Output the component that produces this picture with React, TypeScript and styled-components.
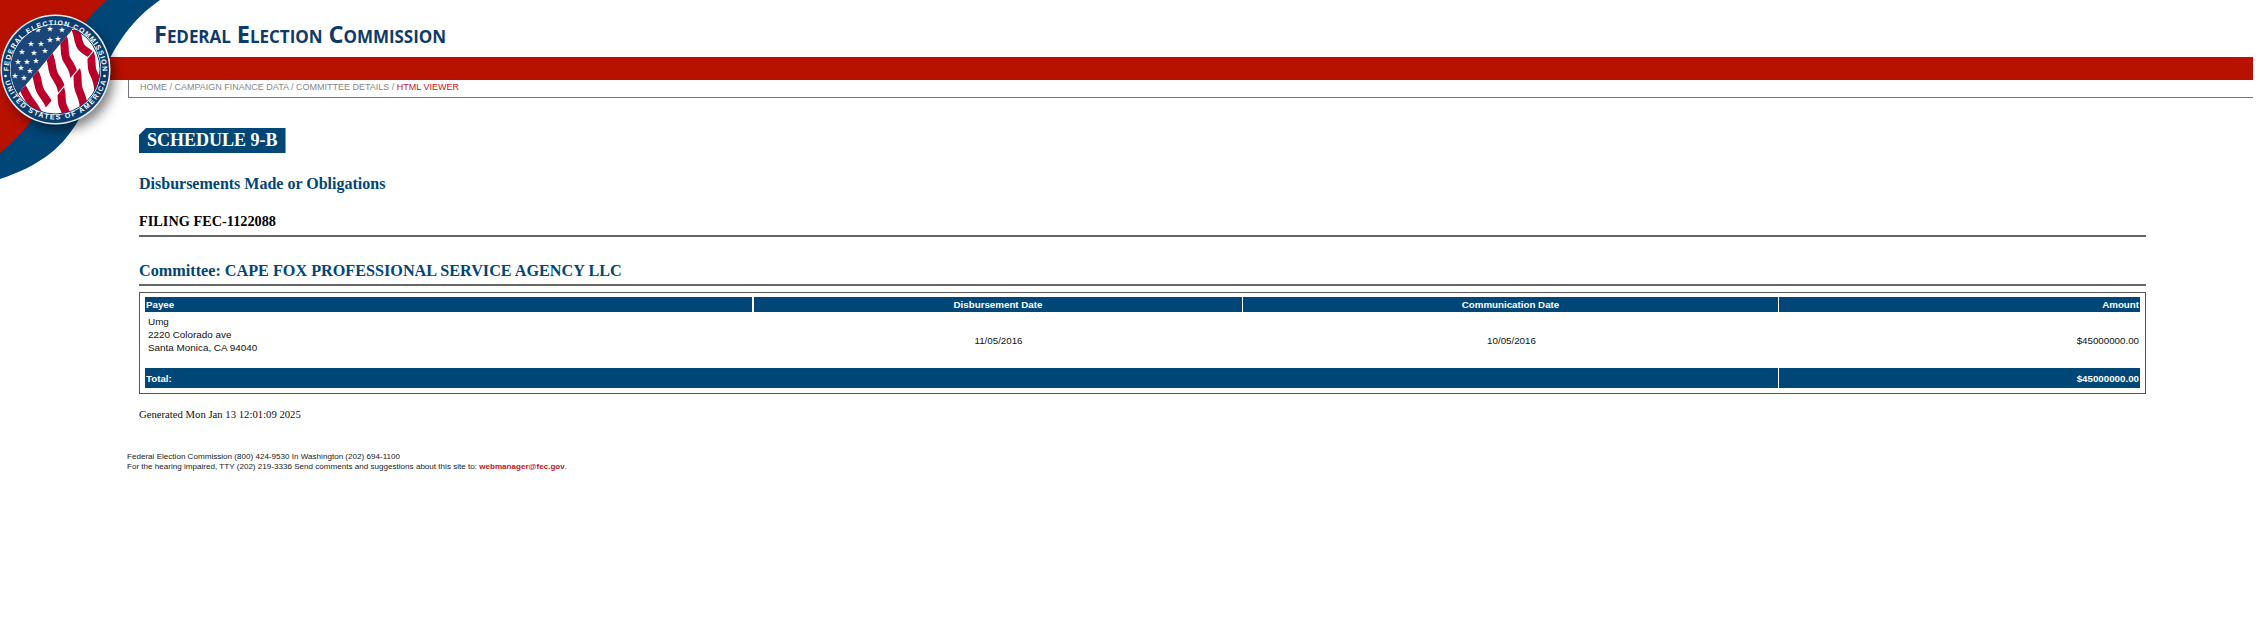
import React from 'react';
import styled, {createGlobalStyle} from 'styled-components';

const navy = '#004677';
const serif = '"Liberation Serif", "Times New Roman", serif';
const sans = '"Liberation Sans", Arial, sans-serif';

const GlobalStyle = createGlobalStyle`
  html, body {
    margin: 0;
    padding: 0;
    background: #fff;
    font-family: ${serif};
  }
`;

const Page = styled.div`
  position: relative;
  width: 2265px;
  height: 643px;
  overflow: hidden;
`;

const SealWrap = styled.div`
  position: absolute;
  left: 0;
  top: 0;
  width: 170px;
  height: 190px;
`;

const Masthead = styled.div`
  height: 57px;
  box-sizing: border-box;
  padding: 20px 0 0 154px;
`;

const SiteTitle = styled.div`
  font-family: "Open Sans", ${sans};
  font-weight: 700;
  font-size: 23.6px;
  font-variant: small-caps;
  line-height: 28px;
  letter-spacing: -0.05px;
  color: #0f3b68;
`;

const RedBar = styled.div`
  height: 23px;
  margin: 0 12px 0 110px;
  background: #b91100;
`;

const Breadcrumb = styled.div`
  height: 18px;
  box-sizing: border-box;
  margin: 0 12px 0 128px;
  padding: 1px 0 0 11px;
  border-left: 1px solid #777;
  border-bottom: 1px solid #777;
  font-family: ${sans};
  font-size: 9px;
  line-height: 12px;
  color: #888;
`;

const Current = styled.span`
  color: #c8141c;
`;

const Content = styled.div`
  width: 2007px;
  margin: 30px 0 0 139px;
`;

const Badge = styled.h1`
  display: inline-block;
  margin: 0;
  height: 25px;
  padding: 0 8px;
  background: ${navy};
  clip-path: polygon(7px 0, 100% 0, 100% 100%, 0 100%, 0 7px);
  font-family: ${serif};
  font-size: 18px;
  font-weight: 700;
  line-height: 25px;
  color: #fff;
  vertical-align: top;
`;

const Subtitle = styled.h2`
  margin: 20px 0 0;
  font-size: 16px;
  font-weight: 700;
  line-height: 22px;
  color: ${navy};
`;

const FilingTitle = styled.h3`
  margin: 15px 0 0;
  font-size: 14.3px;
  font-weight: 700;
  line-height: 22px;
  color: #000;
`;

const Rule = styled.div`
  height: 2px;
  background: #666;
`;

const FilingRule = styled(Rule)`
  margin-top: 3px;
`;

const CommitteeTitle = styled.h2`
  margin: 23px 0 0;
  font-size: 16.2px;
  font-weight: 700;
  line-height: 22px;
  color: ${navy};
`;

const CommitteeRule = styled(Rule)`
  margin-top: 2px;
`;

const Frame = styled.div`
  margin-top: 6px;
  box-sizing: border-box;
  border: 1px solid #555;
  padding: 4px 5px 5px;
`;

const Table = styled.table`
  width: 100%;
  table-layout: fixed;
  border-collapse: separate;
  border-spacing: 0;
  font-family: ${sans};
  font-size: 9.75px;
`;

const Head = styled.th<{$align?: string; $gap?: number}>`
  height: 15px;
  padding: 0 1px;
  background: ${navy};
  color: #fff;
  font-weight: 700;
  line-height: 15px;
  text-align: ${p => p.$align || 'center'};
  border-left: ${p => p.$gap || 0}px solid #fff;
`;

const Cell = styled.td<{$align?: string}>`
  height: 56px;
  padding: 0 1px;
  color: #111;
  text-align: ${p => p.$align || 'center'};
  vertical-align: middle;
`;

const DateCell = styled(Cell)`
  padding-left: 4px;
`;

const PayeeCell = styled.td`
  height: 53px;
  padding: 3px 3px 0;
  color: #111;
  font-size: 9.9px;
  line-height: 13px;
  vertical-align: top;
`;

const Foot = styled(Head)`
  height: 20px;
`;

const Generated = styled.p`
  margin: 13px 0 0;
  font-size: 10.7px;
  line-height: 15px;
  color: #111;
`;

const Footer = styled.footer`
  margin: 30px 0 0 127px;
  font-family: ${sans};
  font-size: 8.08px;
  line-height: 10px;
  color: #222;
`;

const MailLink = styled.a`
  color: #c8141c;
  font-weight: 700;
  text-decoration: none;
`;

const columns = [607, 490, 536, 362];

// 5 point star, used for the canton of the seal
const starPoints = (cx: number, cy: number, r: number) =>
  Array.from({length: 10}, (_, i) => {
    const a = -Math.PI / 2 + (i * Math.PI) / 5;
    const d = i % 2 ? r * 0.42 : r;
    return `${(cx + d * Math.cos(a)).toFixed(2)},${(cy + d * Math.sin(a)).toFixed(2)}`;
  }).join(' ');

const stars = [
  [38, 30], [50, 29], [62, 30],
  [31, 44], [41, 44], [50, 40], [58, 39],
  [22, 52], [34, 53], [45, 51],
  [18, 62], [27, 62], [36, 61],
  [21, 68], [30, 71],
  [15, 76], [24, 78],
];

const upperStripes = [
  'M72 24C80 32 76 42 82 48S92 52 96 62',
  'M60 32C68 42 62 52 67 60S74 70 75 84',
  'M46 50C54 60 50 68 55 76S62 86 63 100',
  'M32 68C40 78 36 84 41 92S50 102 52 116',
  'M20 84C26 92 26 96 31 102S38 112 42 122',
];
const lowerStripes = [
  'M88 48C94 58 90 66 93 72S99 84 98 98',
  'M74 64C80 74 76 82 79 90S85 102 83 118',
  'M58 84C64 92 60 100 63 106S67 114 66 124',
];

const Seal = () => (
  <svg width="170" height="190" viewBox="0 0 170 190">
    <defs>
      <clipPath id="disk">
        <circle cx="55.5" cy="69.5" r="44.5" />
      </clipPath>
      <clipPath id="upperBand">
        <polygon points="19,93 72,30 102,30 93.5,50 43,111 30,125" />
      </clipPath>
      <clipPath id="lowerBand">
        <polygon points="44,111.5 94.5,50.5 112,51 112,130 40,130" />
      </clipPath>
      <filter id="sealShadow" x="-30%" y="-30%" width="170%" height="170%">
        <feGaussianBlur stdDeviation="6" />
      </filter>
      <path id="topArc" d="M8.5 72a47 47 0 0 1 94 0" />
      <path id="bottomArc" d="M3 67a52.5 52.5 0 0 0 105 0" />
    </defs>
    <path
      d="M160 0C132 20 118 40 100 78C84 112 72 136 52 152C36 165 18 173 0 179V0Z"
      fill={navy}
    />
    <path
      d="M107 0C84 20 68 44 56 76C44 106 30 128 0 153V0Z"
      fill="#b91100"
    />
    <circle cx="60" cy="76" r="54" fill="#000" opacity="0.5" filter="url(#sealShadow)" />
    <circle cx="55.5" cy="69.5" r="55" fill="#e9eef3" />
    <circle cx="55.5" cy="69.5" r="53.5" fill="#0b3e6f" />
    <circle cx="55.5" cy="69.5" r="45.5" fill="#fff" />
    <g clipPath="url(#disk)">
      <rect x="10" y="24" width="92" height="92" fill="#fff" />
      <polygon points="10,24 72,24 72,30 19,93 10,103" fill="#1b4679" />
      {stars.map(([x, y]) => (
        <polygon key={`${x}-${y}`} points={starPoints(x, y, 3.2)} fill="#fff" />
      ))}
      <g clipPath="url(#upperBand)" fill="none" stroke="#b8002a" strokeWidth="8">
        {upperStripes.map(d => (
          <path key={d} d={d} />
        ))}
      </g>
      <g clipPath="url(#lowerBand)" fill="none" stroke="#b8002a" strokeWidth="8">
        {lowerStripes.map(d => (
          <path key={d} d={d} />
        ))}
      </g>
    </g>
    <circle cx="55.5" cy="69.5" r="44.5" fill="none" stroke="#0b3e6f" strokeWidth="1" />
    <text fontFamily={sans} fontWeight="700" fontSize="7" fill="#fff">
      <textPath href="#topArc" startOffset="50%" textAnchor="middle" textLength={146} lengthAdjust="spacing">
        FEDERAL ELECTION COMMISSION
      </textPath>
    </text>
    <text fontFamily={sans} fontWeight="700" fontSize="7" fill="#fff">
      <textPath href="#bottomArc" startOffset="50%" textAnchor="middle" textLength={136} lengthAdjust="spacing">
        UNITED STATES OF AMERICA
      </textPath>
    </text>
    <circle cx="5.5" cy="76" r="1.3" fill="#fff" />
    <circle cx="104.5" cy="76" r="1.3" fill="#fff" />
  </svg>
);

export default function App() {
  return (
    <Page>
      <GlobalStyle />
      <Masthead>
        <SiteTitle>Federal Election Commission</SiteTitle>
      </Masthead>
      <RedBar />
      <Breadcrumb>
        HOME / CAMPAIGN FINANCE DATA / COMMITTEE DETAILS / <Current>HTML VIEWER</Current>
      </Breadcrumb>
      <SealWrap>
        <Seal />
      </SealWrap>
      <Content>
        <Badge>SCHEDULE 9-B</Badge>
        <Subtitle>Disbursements Made or Obligations</Subtitle>
        <FilingTitle>FILING FEC-1122088</FilingTitle>
        <FilingRule />
        <CommitteeTitle>Committee: CAPE FOX PROFESSIONAL SERVICE AGENCY LLC</CommitteeTitle>
        <CommitteeRule />
        <Frame>
          <Table>
            <colgroup>
              {columns.map(w => (
                <col key={w} width={w} />
              ))}
            </colgroup>
            <thead>
              <tr>
                <Head $align="left">Payee</Head>
                <Head $gap={2}>Disbursement Date</Head>
                <Head $gap={1}>Communication Date</Head>
                <Head $gap={1} $align="right">Amount</Head>
              </tr>
            </thead>
            <tbody>
              <tr>
                <PayeeCell>
                  Umg
                  <br />
                  2220 Colorado ave
                  <br />
                  Santa Monica, CA 94040
                </PayeeCell>
                <DateCell>11/05/2016</DateCell>
                <DateCell>10/05/2016</DateCell>
                <Cell $align="right">$45000000.00</Cell>
              </tr>
              <tr>
                <Foot as="td" colSpan={3} $align="left">Total:</Foot>
                <Foot as="td" $gap={1} $align="right">$45000000.00</Foot>
              </tr>
            </tbody>
          </Table>
        </Frame>
        <Generated>Generated Mon Jan 13 12:01:09 2025</Generated>
      </Content>
      <Footer>
        Federal Election Commission (800) 424-9530 In Washington (202) 694-1100
        <br />
        For the hearing impaired, TTY (202) 219-3336 Send comments and suggestions about this site to:{' '}
        <MailLink href="#">webmanager@fec.gov</MailLink>.
      </Footer>
    </Page>
  );
}
